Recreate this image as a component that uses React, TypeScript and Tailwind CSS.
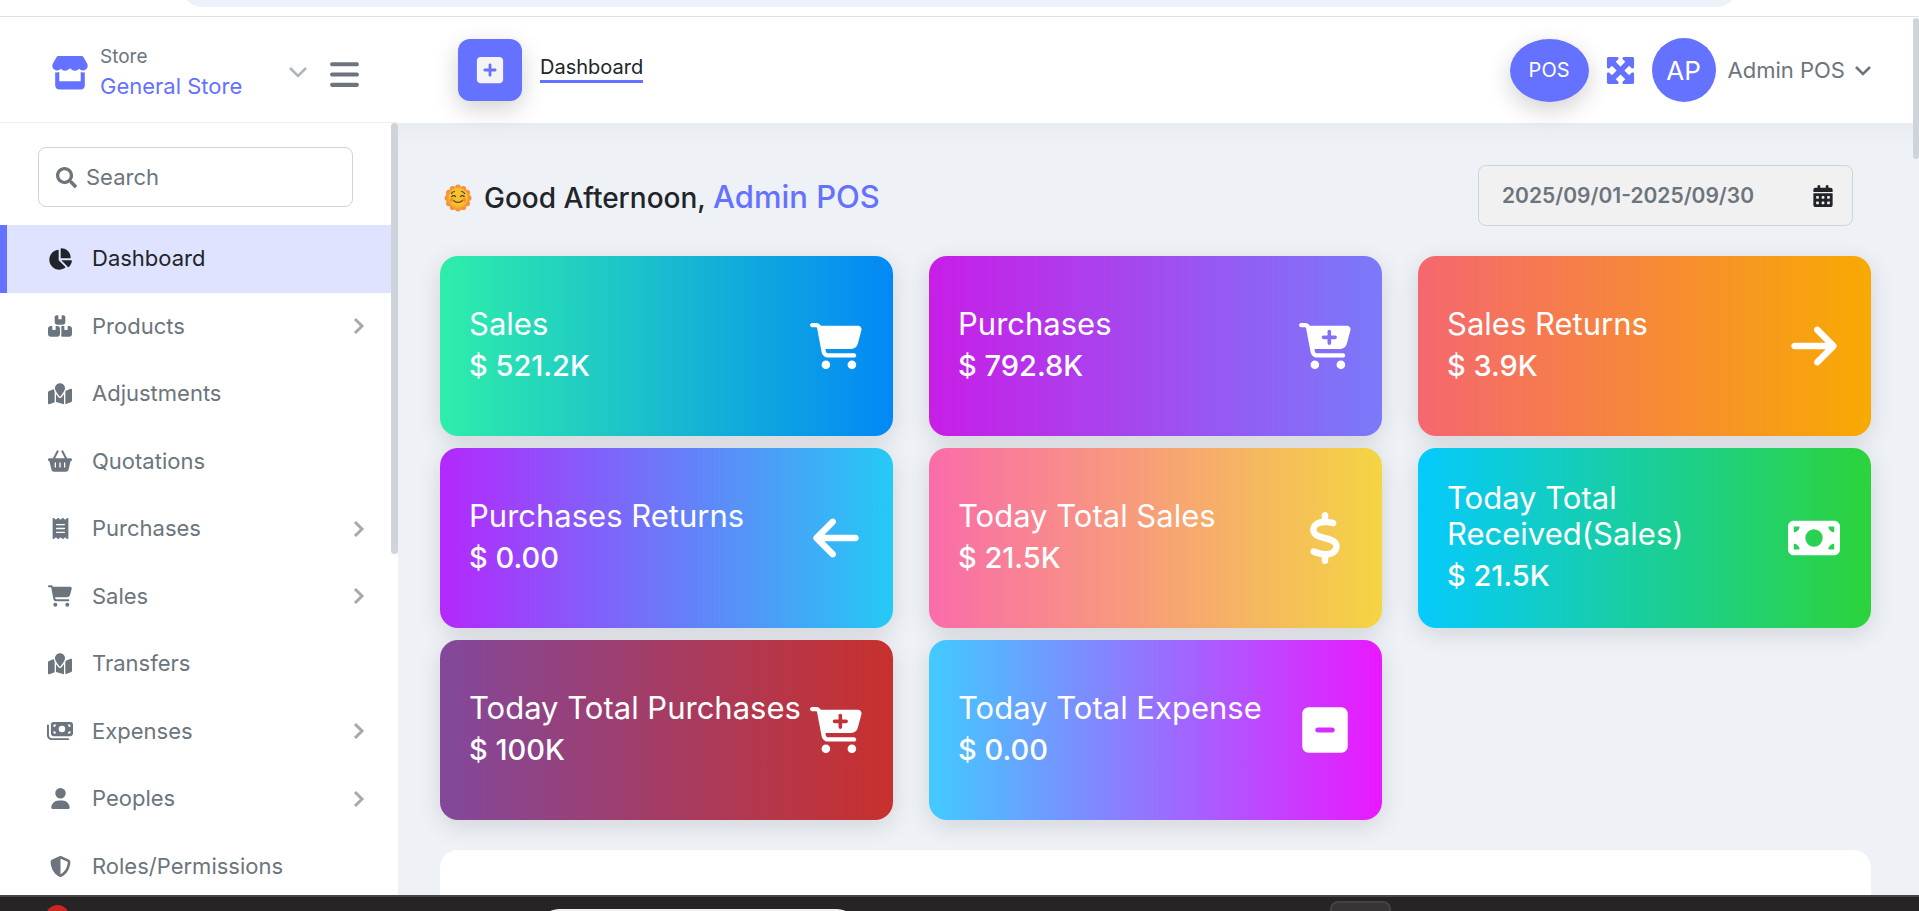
import type { ReactNode } from "react";
import type { IconType } from "react-icons";
import { FaSearch } from "react-icons/fa";
import {
  FaArrowLeft,
  FaArrowRight,
  FaBars,
  FaBasketShopping,
  FaBoxesStacked,
  FaCalendarDays,
  FaCartPlus,
  FaCartShopping,
  FaChartPie,
  FaDollarSign,
  FaMapLocation,
  FaMaximize,
  FaMoneyBill,
  FaMoneyBills,
  FaReceipt,
  FaShieldHalved,
  FaSquareMinus,
  FaSquarePlus,
  FaUser,
} from "react-icons/fa6";

type MenuItem = { label: string; icon: IconType; size: string; active?: boolean; expandable?: boolean };

const menu: MenuItem[] = [
  { label: "Dashboard", icon: FaChartPie, size: "size-6", active: true },
  { label: "Products", icon: FaBoxesStacked, size: "size-6", expandable: true },
  { label: "Adjustments", icon: FaMapLocation, size: "size-6" },
  { label: "Quotations", icon: FaBasketShopping, size: "size-6" },
  { label: "Purchases", icon: FaReceipt, size: "size-[21px]", expandable: true },
  { label: "Sales", icon: FaCartShopping, size: "size-6", expandable: true },
  { label: "Transfers", icon: FaMapLocation, size: "size-6" },
  { label: "Expenses", icon: FaMoneyBills, size: "size-[26px]", expandable: true },
  { label: "Peoples", icon: FaUser, size: "size-[21px]", expandable: true },
  { label: "Roles/Permissions", icon: FaShieldHalved, size: "size-[21px]" },
];

type Stat = { title: string; value: string; icon: IconType; gradient: string };

const stats: Stat[] = [
  { title: "Sales", value: "$ 521.2K", icon: FaCartShopping, gradient: "from-[#2eeeaa] to-[#0288f6]" },
  { title: "Purchases", value: "$ 792.8K", icon: FaCartPlus, gradient: "from-[#c81ee6] to-[#7a7afa]" },
  { title: "Sales Returns", value: "$ 3.9K", icon: FaArrowRight, gradient: "from-[#f5676f] to-[#f8aa02]" },
  { title: "Purchases Returns", value: "$ 0.00", icon: FaArrowLeft, gradient: "from-[#b428fd] to-[#24caf5]" },
  { title: "Today Total Sales", value: "$ 21.5K", icon: FaDollarSign, gradient: "from-[#fa6caa] to-[#f4d543]" },
  { title: "Today Total Received(Sales)", value: "$ 21.5K", icon: FaMoneyBill, gradient: "from-[#06cafd] to-[#2cd33a]" },
  { title: "Today Total Purchases", value: "$ 100K", icon: FaCartPlus, gradient: "from-[#82489c] to-[#c8302c]" },
  { title: "Today Total Expense", value: "$ 0.00", icon: FaSquareMinus, gradient: "from-[#42caff] to-[#ea18ff]" },
];

function Chevron({ className, children }: { className: string; children: ReactNode }) {
  return (
    <svg viewBox="0 0 20 20" fill="none" stroke="currentColor" className={className} aria-hidden="true">
      {children}
    </svg>
  );
}

function StoreLogo() {
  return (
    <svg viewBox="0 0 36 34" fill="currentColor" className="h-[34px] w-9 shrink-0 text-[#6571ff]" aria-hidden="true">
      <path d="M6.6 0h22.8c.9 0 1.7.5 2.1 1.2l3.6 6.2c1.6 3.1-.2 6.6-3.5 7a5 5 0 0 1-4.5-1.7 5.500 5.500 0 0 1-8.100.3 1.500 1.500 0 0 0-2 0 5.500 5.500 0 0 1-8.100-.3 5 5 0 0 1-4.500 1.700C1.100 14-.7 10.500.9 7.400l3.600-6.200C4.900.5 5.700 0 6.600 0z" />
      <path d="M3.2 16.3c1.4.3 2.8.2 4.1-.3v9.300h21.400V16c1.300.5 2.700.6 4.100.3v13.200c0 2.300-1.800 4.100-4.100 4.100H7.300c-2.300 0-4.100-1.800-4.100-4.100z" />
    </svg>
  );
}

function SunFace() {
  const petals = Array.from({ length: 12 }, (_, i) => (i * Math.PI) / 6);
  return (
    <svg viewBox="0 0 28 28" className="size-7 shrink-0" role="img" aria-label="Sun with face">
      {petals.map((a) => (
        <circle key={a} cx={14 + Math.sin(a) * 10.6} cy={14 - Math.cos(a) * 10.6} r="2.9" fill="#f8923a" />
      ))}
      <circle cx="14" cy="14" r="10.4" fill="#f5a92b" />
      <circle cx="14.3" cy="13.2" r="9.4" fill="#f7c02e" />
      <circle cx="7.8" cy="16" r="2" fill="#f58d3c" />
      <circle cx="20.2" cy="16" r="2" fill="#f58d3c" />
      <g fill="none" stroke="#5a3a22" strokeWidth="1.2" strokeLinecap="round">
        <path d="M7.4 9.6c.6-1.3 1.6-2 3-2.1M20.6 9.6c-.6-1.3-1.6-2-3-2.1" />
        <path d="M7.8 12.6c.9-1.4 2.9-1.4 3.7 0M16.5 12.6c.9-1.4 2.9-1.4 3.7 0" />
        <path d="M9.8 16.6c1.9 2.4 6.5 2.4 8.4 0" />
      </g>
    </svg>
  );
}

function StatCard({ title, value, icon: Icon, gradient }: Stat) {
  return (
    <article
      className={`flex h-[180px] items-center justify-between rounded-[18px] bg-linear-to-r/srgb pr-[31px] pl-[29px] text-white shadow-[0_6px_24px_rgba(0,0,0,0.12)] ${gradient}`}
    >
      <div className="flex flex-col gap-1.5 pb-0.5">
        <h3 className="text-[31px] leading-9">{title}</h3>
        <p className="text-[29px] leading-9 font-medium">{value}</p>
      </div>
      <Icon className="size-[52px] shrink-0" aria-hidden="true" />
    </article>
  );
}

function Sidebar() {
  return (
    <aside className="relative w-[398px] shrink-0 overflow-hidden bg-white">
      <div className="px-[38px] pt-6 pb-[18px]">
        <label className="flex h-[60px] w-[315px] items-center gap-[9px] rounded-lg border border-[#ced4da] px-[17px] text-[#6c757d]">
          <FaSearch className="text-[21px]" aria-hidden="true" />
          <input
            type="search"
            placeholder="Search"
            aria-label="Search menu"
            className="min-w-0 flex-1 bg-transparent text-[22px] outline-none placeholder:text-[#6c757d]"
          />
        </label>
      </div>
      <nav aria-label="Main menu">
        <ul>
          {menu.map(({ label, icon: Icon, size, active, expandable }) => (
            <li key={label}>
              <a
                href="#"
                className={`flex items-center border-l-[7px] py-5 pr-[29px] pl-10 text-[22px] leading-tight ${
                  active ? "border-[#6571ff] bg-[#e0e3ff] text-[#212529]" : "border-transparent text-[#6c757d]"
                }`}
              >
                <span className="flex w-[26px] justify-center">
                  <Icon className={size} aria-hidden="true" />
                </span>
                <span className="ml-[19px] flex-1">{label}</span>
                {expandable && (
                  <Chevron className="size-5 text-[#a9a9a9]">
                    <path d="M6 3l7 7-7 7" strokeWidth="3" />
                  </Chevron>
                )}
              </a>
            </li>
          ))}
        </ul>
      </nav>
      <div className="absolute top-0 right-0 h-[431px] w-[7px] rounded-full bg-[#ced4da]" />
    </aside>
  );
}

function Header() {
  return (
    <header className="relative flex h-[106px] shrink-0 bg-white">
      <div className="flex w-[398px] shrink-0 items-center border-b border-[#eeeeee] pt-1.5 pl-[52px]">
        <StoreLogo />
        <div className="ml-3 flex w-[188px] flex-col gap-px pb-[3px]">
          <span className="text-[19px] leading-7 text-[#6c757d]">Store</span>
          <span className="text-[22px] leading-7 text-[#6571ff]">General Store</span>
        </div>
        <button type="button" aria-label="Change store" className="text-[#adb5bd]">
          <Chevron className="size-5">
            <path d="M2 5l8 8 8-8" strokeWidth="2.6" />
          </Chevron>
        </button>
        <button type="button" aria-label="Toggle sidebar" className="mt-1 ml-5 text-[33px] text-[#6c757d]">
          <FaBars />
        </button>
      </div>
      <div className="flex flex-1 items-center justify-between pr-[46px] pl-[60px]">
        <div className="flex items-center gap-[18px]">
          <button
            type="button"
            aria-label="Quick add"
            className="flex h-[62px] w-16 items-center justify-center rounded-xl bg-[#6571ff] text-[30px] text-[#f4f4f4] shadow-[0_8px_24px_rgba(0,0,0,0.18)]"
          >
            <FaSquarePlus />
          </button>
          <a href="#" className="mb-1 border-b-[3px] border-[#6571ff] text-[20px] leading-[26px] text-[#212529]">
            Dashboard
          </a>
        </div>
        <div className="flex items-center">
          <button
            type="button"
            className="h-[63px] w-[79px] rounded-[50%] bg-[#6571ff] text-[20px] text-white shadow-[0_8px_24px_rgba(0,0,0,0.18)]"
          >
            POS
          </button>
          <button type="button" aria-label="Full screen" className="ml-4 text-[31px] text-[#6571ff]">
            <FaMaximize />
          </button>
          <span className="ml-4 flex size-16 items-center justify-center rounded-full bg-[#6571ff] text-[26px] text-white">
            AP
          </span>
          <button type="button" className="ml-3 flex items-center gap-2 text-[22px] text-[#6c757d]">
            Admin POS
            <Chevron className="size-5">
              <path d="M3 7l7 7 7-7" strokeWidth="2.6" />
            </Chevron>
          </button>
        </div>
      </div>
    </header>
  );
}

export default function App() {
  return (
    <div className="flex h-screen flex-col overflow-hidden bg-white font-['Inter',sans-serif] text-[#212529]">
      <div className="flex h-[17px] shrink-0 flex-col justify-end overflow-hidden border-b border-[#dfe1e3] px-[180px] pb-[9px]">
        <div className="h-[46px] shrink-0 rounded-full bg-[#edf1fa]" />
      </div>
      <div className="relative flex min-h-0 flex-1 flex-col overflow-hidden">
        <Header />
        <div className="flex min-h-0 flex-1">
          <Sidebar />
          <main className="min-w-0 flex-1 overflow-hidden bg-[#eef1f6] bg-linear-to-b/srgb from-[#e9edf1] to-[#eef1f6] to-[24px] pt-[42px] pr-12 pl-[42px]">
            <div className="flex items-center justify-between pr-[18px] pl-1">
              <h1 className="flex items-center gap-3 pt-1 text-[28px] font-medium">
                <SunFace />
                <span>
                  Good Afternoon, <span className="text-[31px] text-[#6571ff]">Admin POS</span>
                </span>
              </h1>
              <label className="flex h-[61px] w-[375px] items-center rounded-lg border border-[#ced4da] bg-[#f1f1f1] pr-[18px] pl-[23px]">
                <input
                  type="text"
                  readOnly
                  aria-label="Date range"
                  defaultValue="2025/09/01-2025/09/30"
                  className="min-w-0 flex-1 bg-transparent text-[21px] font-semibold text-[#6c757d] outline-none"
                />
                <FaCalendarDays className="text-[22px]" aria-hidden="true" />
              </label>
            </div>
            <section aria-label="Statistics" className="mt-[30px] grid grid-cols-3 gap-x-9 gap-y-3">
              {stats.map((stat) => (
                <StatCard key={stat.title} {...stat} />
              ))}
            </section>
            <section aria-label="Reports" className="mt-[30px] h-80 rounded-[18px] bg-white" />
          </main>
        </div>
        <div className="absolute top-px right-0 h-[141px] w-1.5 rounded-full bg-[#ced4da]" />
      </div>
      <footer className="flex h-4 shrink-0 items-start overflow-hidden border-t-2 border-[#464646] bg-[#272425] pl-[46px]">
        <div className="mt-2 flex h-6 w-[23px] justify-center rounded-full bg-[#c8281e] pt-1.5">
          <div className="h-2 w-0.5 bg-white" />
        </div>
        <div className="mt-3 ml-[470px] h-12 w-[318px] rounded-[20px] bg-[#f3f1f1]" />
        <div className="mt-1 ml-[473px] h-12 w-[61px] rounded-lg border-2 border-[#454243] bg-[#383435]" />
      </footer>
    </div>
  );
}
